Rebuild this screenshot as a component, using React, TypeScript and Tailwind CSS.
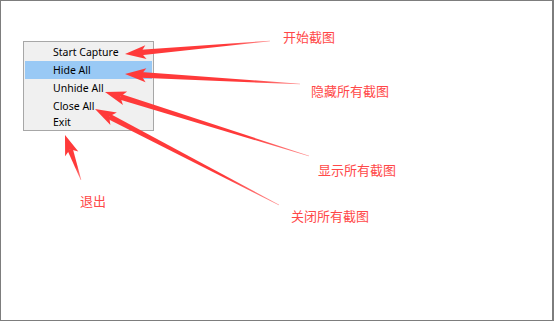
import React from "react";

type Arrow = { tip: [number, number]; tail: [number, number] };

const arrows: Arrow[] = [
  { tip: [123, 52], tail: [268, 39] },
  { tip: [123, 72], tail: [298, 82] },
  { tip: [103, 90], tail: [307, 154] },
  { tip: [93, 107], tail: [277, 203] },
  { tip: [63, 133], tail: [79, 178] },
];

function arrowPolys(a: Arrow) {
  const [tx, ty] = a.tip;
  const [sx, sy] = a.tail;
  const dx = tx - sx;
  const dy = ty - sy;
  const len = Math.hypot(dx, dy);
  const ux = dx / len;
  const uy = dy / len;
  const nx = -uy;
  const ny = ux;
  const headLen = Math.min(21, len * 0.42);
  const hw = 7;
  const sw = 2.8;
  const bx = tx - ux * headLen;
  const by = ty - uy * headLen;
  const nbx = tx - ux * (headLen - 5);
  const nby = ty - uy * (headLen - 5);
  const head = [
    [tx, ty],
    [bx + nx * hw, by + ny * hw],
    [nbx, nby],
    [bx - nx * hw, by - ny * hw],
  ]
    .map((p) => p.join(","))
    .join(" ");
  const shaft = [
    [sx + nx * 0.3, sy + ny * 0.3],
    [nbx + nx * sw, nby + ny * sw],
    [nbx - nx * sw, nby - ny * sw],
    [sx - nx * 0.3, sy - ny * 0.3],
  ]
    .map((p) => p.join(","))
    .join(" ");
  return { head, shaft };
}

const items = ["Start Capture", "Hide All", "Unhide All", "Close All", "Exit"];

const labels: { text: string; x: number; y: number }[] = [
  { text: "开始截图", x: 282, y: 29 },
  { text: "隐藏所有截图", x: 310, y: 83 },
  { text: "显示所有截图", x: 317, y: 162 },
  { text: "退出", x: 79, y: 193 },
  { text: "关闭所有截图", x: 290, y: 208 },
];

export default function App() {
  return (
    <div className="relative w-[554px] h-[321px] bg-white border-l border-t border-b border-r-2 border-[#7d7d7d] overflow-hidden">
      <div
        className="ml-[22px] mt-[40px] w-[131px] border border-[#a7a7a7] bg-[#f0f0f0] pt-px text-[10.5px] text-black"
        style={{ fontFamily: '"Noto Sans", "Open Sans", sans-serif' }}
      >
        {items.map((t, i) => (
          <div
            key={t}
            className={
              (i === 1 ? "bg-[#99c9f5] " : "") +
              (i === 4 ? "h-[15px] leading-[15px] " : "h-[18px] leading-[18px] ") +
              "mx-px pl-[28px] whitespace-nowrap"
            }
          >
            {t}
          </div>
        ))}
      </div>

      {labels.map((l) => (
        <div
          key={l.text}
          className="absolute text-[13px] leading-[14px] text-[#ff4848] whitespace-nowrap"
          style={{
            left: l.x,
            top: l.y,
            fontFamily: '"Noto Sans CJK SC", "Noto Sans", sans-serif',
          }}
        >
          {l.text}
        </div>
      ))}

      <svg
        className="absolute left-0 top-0 pointer-events-none"
        width={554}
        height={321}
        viewBox="-1 -1 554 321"
      >
        <defs>
          {arrows.map((a, i) => (
            <linearGradient
              key={i}
              id={"ag" + i}
              gradientUnits="userSpaceOnUse"
              x1={a.tail[0]}
              y1={a.tail[1]}
              x2={a.tip[0]}
              y2={a.tip[1]}
            >
              <stop offset="0" stopColor="#ff9090" />
              <stop offset="0.3" stopColor="#ff3a3a" />
              <stop offset="1" stopColor="#ff3a3a" />
            </linearGradient>
          ))}
        </defs>
        {arrows.map((a, i) => {
          const { head, shaft } = arrowPolys(a);
          return (
            <g key={i}>
              <polygon points={shaft} fill={"url(#ag" + i + ")"} />
              <polygon points={head} fill="#ff3a3a" />
            </g>
          );
        })}
      </svg>
    </div>
  );
}
